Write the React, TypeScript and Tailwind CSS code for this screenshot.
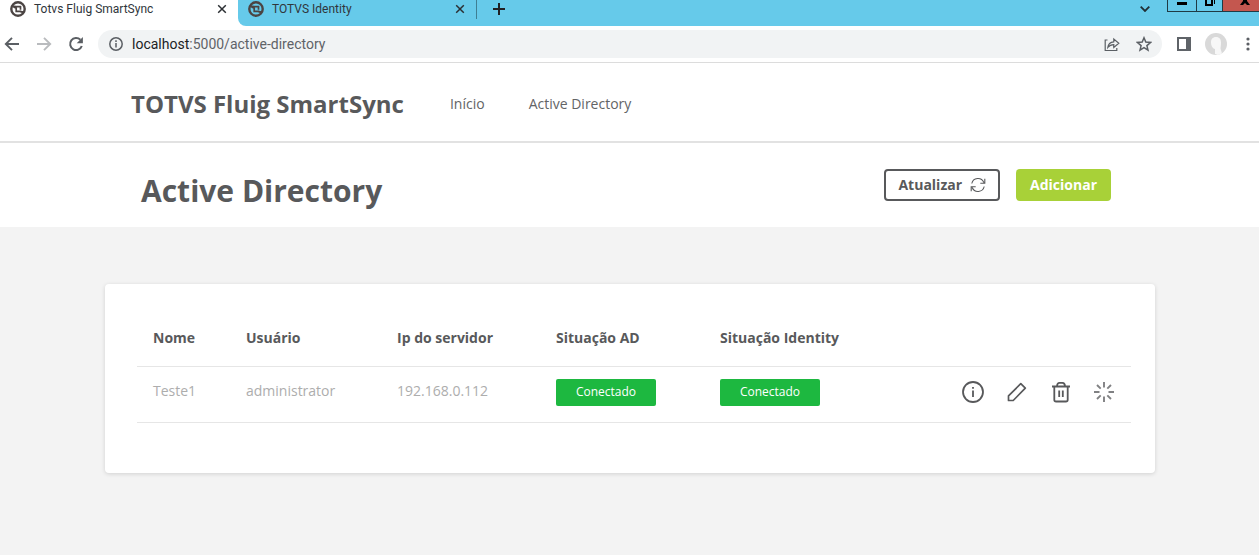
import type { ReactNode } from "react";

interface Connection {
  name: string;
  user: string;
  ip: string;
  adStatus: string;
  identityStatus: string;
}

const CONNECTIONS: Connection[] = [
  {
    name: "Teste1",
    user: "administrator",
    ip: "192.168.0.112",
    adStatus: "Conectado",
    identityStatus: "Conectado",
  },
];

function TotvsLogo() {
  return (
    <svg viewBox="0 0 16 16" className="size-4 shrink-0" fill="none" stroke="#4b4443" aria-hidden>
      <circle cx="8" cy="8" r="6.700" strokeWidth="2.400" />
      <path d="M2.500 5l3.500.6h4.500v3.200M13.500 11l-3.500-.6H6.200V7.200L3 5.500M10 10.400l3 1" strokeWidth="1.700" />
    </svg>
  );
}

function CloseIcon() {
  return (
    <svg viewBox="0 0 10 10" className="size-[10px]" stroke="#2b2f33" strokeWidth="1.5" aria-hidden>
      <path d="M1.2 1.2l7.6 7.6M8.8 1.2L1.2 8.8" />
    </svg>
  );
}

function Tab({ title, active }: { title: string; active?: boolean }) {
  return (
    <div className={`flex h-[26px] w-[238px] items-center pr-[11px] pb-2 pl-[10px] ${active ? "bg-white" : ""}`}>
      <button className="flex flex-1 items-center gap-2 text-left text-xs text-[#30363b]">
        <TotvsLogo />
        {title}
      </button>
      <button aria-label="Fechar guia">
        <CloseIcon />
      </button>
    </div>
  );
}

function TabStrip() {
  return (
    <div className="flex h-[26px] bg-white font-[Roboto,sans-serif]">
      <Tab title="Totvs Fluig SmartSync" active />
      <div className="flex flex-1 rounded-bl-lg bg-[#66caea]">
        <Tab title="TOTVS Identity" />
        <div className="h-[19px] w-px bg-[#3f7f93]" />
        <button className="flex h-[18px] w-11 items-center justify-center" aria-label="Nova guia">
          <svg viewBox="0 0 12 12" className="size-3" stroke="#202124" strokeWidth="2" aria-hidden>
            <path d="M6 0v12M0 6h12" />
          </svg>
        </button>
        <button className="mr-[17px] ml-auto flex h-[18px] items-center" aria-label="Pesquisar guias">
          <svg viewBox="0 0 10 6" className="h-[6px] w-[10px]" fill="none" stroke="#202f35" strokeWidth="1.8" aria-hidden>
            <path d="M.7.7L5 5 9.300.7" />
          </svg>
        </button>
        <div className="flex h-3 border-b border-l border-[#1f3b45]">
          <button className="flex w-7 justify-center" aria-label="Minimizar">
            <svg viewBox="0 0 10 11" className="h-[11px] w-[10px]" aria-hidden>
              <path d="M0 2h10v3H0z" fill="#000" />
            </svg>
          </button>
          <button className="flex w-[26px] justify-center border-l border-[#1f3b45]" aria-label="Restaurar">
            <svg viewBox="0 0 10 11" className="h-[11px] w-[10px]" fill="none" stroke="#000" aria-hidden>
              <path d="M1 0v5h6V0" strokeWidth="2" />
              <path d="M9.500 0v4" />
            </svg>
          </button>
          <button className="flex w-[37px] justify-center border-l border-[#1f3b45] bg-[#c4574f] pl-2" aria-label="Fechar">
            <svg viewBox="0 0 10 11" className="h-[11px] w-[10px]" aria-hidden>
              <path d="M3 0h4v1l3 4H7L5 3 3 5H0l3-4z" fill="#000" />
            </svg>
          </button>
        </div>
      </div>
    </div>
  );
}

function AddressBar() {
  return (
    <div className="flex items-center border-b border-[#dcdcdc] bg-white py-1 pr-[7px] pl-1">
      <div className="flex items-center gap-4">
        <button aria-label="Voltar">
          <svg viewBox="0 0 16 16" className="size-4" fill="none" stroke="#5b5f64" strokeWidth="1.9" aria-hidden>
            <path d="M15 8H2.500M8 1.800L1.800 8 8 14.200" />
          </svg>
        </button>
        <button aria-label="Avançar">
          <svg viewBox="0 0 16 16" className="size-4" fill="none" stroke="#b9bbbe" strokeWidth="1.9" aria-hidden>
            <path d="M1 8h12.500M8 1.800L14.200 8 8 14.200" />
          </svg>
        </button>
        <button aria-label="Recarregar">
          <svg viewBox="0 0 16 16" className="size-4" fill="none" stroke="#5b5f64" strokeWidth="2" aria-hidden>
            <path d="M13.800 10A6 6 0 1 1 12.400 3.800" />
            <path d="M14.900 1v6.200H8.700z" fill="#5b5f64" stroke="none" />
          </svg>
        </button>
      </div>
      <div className="ml-[14px] flex h-7 flex-1 items-center rounded-full bg-[#f1f3f4] pr-[10px] pl-[11px] font-[Roboto,sans-serif] text-sm">
        <svg viewBox="0 0 14 14" className="mr-[9px] size-[14px]" fill="none" stroke="#5b5f64" strokeWidth="1.5" aria-hidden>
          <circle cx="7" cy="7" r="6.200" />
          <path d="M7 6v4.500M7 3.300v1.600" />
        </svg>
        <label htmlFor="url" className="text-[#202124]">
          localhost
        </label>
        <input
          id="url"
          type="text"
          defaultValue=":5000/active-directory"
          className="min-w-0 flex-1 bg-transparent text-[#5f6368] outline-none"
        />
        <button className="mr-4" aria-label="Compartilhar">
          <svg viewBox="0 0 16 16" className="size-4" fill="none" stroke="#5b5f64" strokeWidth="1.200" aria-hidden>
            <path d="M3.500 4H1.200v10.500h11.600V12" />
            <path d="M3.800 11.500c.4-3.700 2.700-5.500 6-5.700V3l5 4.300-5 4.200V8.700c-2.700 0-4.500.9-6 2.800z" />
          </svg>
        </button>
        <button aria-label="Adicionar aos favoritos">
          <svg viewBox="0 0 16 16" className="size-4" fill="none" stroke="#5b5f64" strokeWidth="1.500" aria-hidden>
            <path d="M8 1.800l1.800 4.300 4.700.4-3.600 3.100 1.100 4.500L8 11.700l-4 2.400 1.100-4.500-3.600-3.100 4.700-.4z" />
          </svg>
        </button>
      </div>
      <button className="ml-[15px]" aria-label="Painel lateral">
        <svg viewBox="0 0 14 14" className="size-[14px]" aria-hidden>
          <path d="M0 0h14v14H0zM2 2v10h7V2z" fill="#5f6368" fillRule="evenodd" />
        </svg>
      </button>
      <button className="ml-[14px]" aria-label="Perfil">
        <svg viewBox="0 0 22 22" className="size-[22px]" aria-hidden>
          <circle cx="11" cy="11" r="11" fill="#d9d9d9" />
          <path d="M11 4c3.500 0 5 2.300 5 5.500 0 3-.3 4.500-.5 6l1.500 5-4 1.500-3-1V16c-2.500-.5-4-3.500-4-6.500C6 6.300 7.500 4 11 4z" fill="#f7f7f7" />
        </svg>
      </button>
      <button className="ml-[17px]" aria-label="Menu">
        <svg viewBox="0 0 8 14" className="h-[14px] w-2" fill="#5b5f64" aria-hidden>
          <circle cx="4" cy="2" r="1.600" />
          <circle cx="4" cy="7" r="1.600" />
          <circle cx="4" cy="12" r="1.600" />
        </svg>
      </button>
    </div>
  );
}

function StatusBadge({ children }: { children: ReactNode }) {
  return (
    <span className="flex h-[27px] w-[100px] items-center justify-center rounded-xs bg-[#1db840] text-xs text-white">
      {children}
    </span>
  );
}

function RowActions() {
  return (
    <div className="flex items-center justify-end gap-[22px] text-[#58595b]">
      <button aria-label="Informações">
        <svg viewBox="0 0 22 22" className="size-[22px]" fill="none" stroke="currentColor" strokeWidth="1.800" aria-hidden>
          <circle cx="11" cy="11" r="10" />
          <path d="M11 9.500V16M11 6v1.800" />
        </svg>
      </button>
      <button aria-label="Editar">
        <svg viewBox="0 0 22 22" className="size-[22px]" fill="none" stroke="currentColor" strokeWidth="1.700" strokeLinejoin="round" aria-hidden>
          <path d="M2.500 19.500v-4.700L14.800 2.700l4.500 4.500L7.200 19.500z" />
        </svg>
      </button>
      <button aria-label="Excluir">
        <svg viewBox="0 0 22 22" className="size-[22px]" fill="none" stroke="currentColor" strokeWidth="1.800" aria-hidden>
          <path d="M2 5.500h18M4.300 5.500v13.200c0 1.100.7 1.800 1.800 1.800h9.800c1.100 0 1.800-.7 1.800-1.800V5.500M7 5.500c0-2.500 1-3.700 2.500-3.700h3c1.500 0 2.500 1.200 2.500 3.700M9.200 9.500v6.500M12.800 9.500v6.500" />
        </svg>
      </button>
      <button aria-label="Sincronizar">
        <svg viewBox="0 0 20 20" className="size-5" fill="none" stroke="#808183" strokeWidth="1.900" aria-hidden>
          <path d="M10 0v5.500M10 14.500V20M0 10h5.500M14.500 10H20M3 3l3.700 3.700M13.300 13.300L17 17M3 17l3.700-3.700M13.300 6.700L17 3" />
        </svg>
      </button>
    </div>
  );
}

function ConnectionsTable({ rows }: { rows: Connection[] }) {
  return (
    <table className="w-full table-fixed text-left text-sm">
      <thead>
        <tr className="h-[58px] border-b border-[#e6e6e6] text-[#58595b]">
          <th className="w-[93px] pt-0.5 pl-4">Nome</th>
          <th className="w-[151px] pt-0.5 pl-4">Usuário</th>
          <th className="w-[159px] pt-0.5 pl-4">Ip do servidor</th>
          <th className="w-[164px] pt-0.5 pl-4">Situação AD</th>
          <th className="w-[164px] pt-0.5 pl-4">Situação Identity</th>
          <td />
        </tr>
      </thead>
      <tbody>
        {rows.map((row) => (
          <tr key={row.name} className="h-14 border-b border-[#e6e6e6] align-top text-[#adadad]">
            <td className="pt-[14px] pl-4">{row.name}</td>
            <td className="pt-[14px] pl-4">{row.user}</td>
            <td className="pt-[14px] pl-4">{row.ip}</td>
            <td className="pt-3 pl-4">
              <StatusBadge>{row.adStatus}</StatusBadge>
            </td>
            <td className="pt-3 pl-4">
              <StatusBadge>{row.identityStatus}</StatusBadge>
            </td>
            <td className="pt-[14px] pr-[17px]">
              <RowActions />
            </td>
          </tr>
        ))}
      </tbody>
    </table>
  );
}

export default function App() {
  return (
    <div className="flex min-h-screen flex-col bg-[#f3f3f3] font-['Open_Sans',sans-serif]">
      <TabStrip />
      <AddressBar />
      <header className="border-b-2 border-[#e2e2e2] bg-white pl-px">
        <nav className="mx-auto flex h-[78px] max-w-[1050px] items-center px-[26px] pt-[3px] text-sm text-[#636466]">
          <a href="#" className="mr-[46px] text-2xl font-bold text-[#58595b]">
            TOTVS Fluig SmartSync
          </a>
          <a href="#" className="mr-11">
            Início
          </a>
          <a href="#">Active Directory</a>
        </nav>
      </header>
      <div className="bg-white pl-px">
        <div className="mx-auto flex h-[84px] max-w-[1050px] items-start gap-4 pt-[26px] pr-11 pl-9 text-sm text-[#58595b]">
          <h1 className="mr-auto text-3xl leading-[44px] font-bold">Active Directory</h1>
          <button className="flex h-8 items-center gap-2 rounded border-2 border-[#58595b] px-3 font-bold">
            Atualizar
            <svg viewBox="0 0 16 16" className="size-4" fill="none" stroke="currentColor" strokeWidth="1.100" aria-hidden>
              <path d="M1.800 6.500A6.300 6.300 0 0 1 13.800 5.500M14.800 1.800v4.500h-4.500M14.200 9.500A6.300 6.300 0 0 1 2.200 10.500M1.200 14.200V9.700h4.500" />
            </svg>
          </button>
          <button className="h-8 rounded bg-[#a8d138] px-[14px] font-bold text-white">Adicionar</button>
        </div>
      </div>
      <main className="pt-[57px] pl-px">
        <section className="mx-auto max-w-[1050px] rounded bg-white pt-6 pr-6 pb-[50px] pl-8 shadow-[0_1px_4px_rgba(0,0,0,0.14)]">
          <ConnectionsTable rows={CONNECTIONS} />
        </section>
      </main>
    </div>
  );
}
